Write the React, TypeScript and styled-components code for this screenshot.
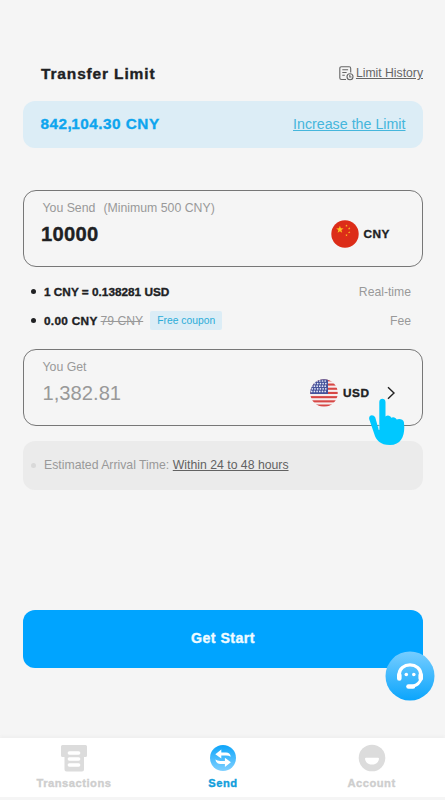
import React from "react";
import styled, { createGlobalStyle, css } from "styled-components";

const GlobalStyle = createGlobalStyle`
  * { box-sizing: border-box; }
  html, body { margin: 0; padding: 0; background: #f5f5f5; }
  body { font-family: "Liberation Sans", Arial, sans-serif; color: #202123; }
  svg { display: block; flex: none; }
`;

const heavy = css`
  font-weight: 700;
  -webkit-text-stroke: 0.35px currentColor;
`;

const Screen = styled.div`
  width: 445px;
  height: 800px;
  display: flex;
  flex-direction: column;
  background: #f5f5f5;
  overflow: hidden;
  white-space: nowrap;
`;

const Content = styled.main`
  flex: 1;
  display: flex;
  flex-direction: column;
  padding: 61px 22px 0 23px;
`;

const Header = styled.header`
  height: 24px;
  margin-bottom: 15.5px;
  padding-left: 18px;
  display: flex;
  align-items: center;
  justify-content: space-between;
`;

const Title = styled.h1`
  ${heavy}
  margin: 0;
  font-size: 15.5px;
  line-height: 25px;
  letter-spacing: 0.85px;
`;

const HistoryLink = styled.a`
  display: flex;
  align-items: center;
  gap: 2px;
  font-size: 12.2px;
  color: #666;
  text-decoration: underline;
`;

const LimitCard = styled.section`
  height: 47.5px;
  margin-bottom: 42px;
  padding: 0 17.5px;
  display: flex;
  align-items: center;
  justify-content: space-between;
  border-radius: 12px;
  background: #dcedf6;
`;

const LimitAmount = styled.span`
  ${heavy}
  margin-top: -1px;
  font-size: 15.3px;
  letter-spacing: 0.5px;
  color: #0ea5ee;
`;

const Tight = styled.span`
  letter-spacing: -0.5px;
`;

const IncreaseLink = styled.a`
  margin-top: -1px;
  font-size: 14.25px;
  color: #45b6dc;
  text-decoration: underline;
`;

const AmountCard = styled.section`
  height: 77px;
  padding: 8px 18px;
  display: flex;
  justify-content: space-between;
  border: 1px solid #777;
  border-radius: 13px;
`;

const Field = styled.div`
  display: flex;
  flex-direction: column;
`;

const Label = styled.span`
  display: flex;
  gap: 8px;
  height: 19px;
  padding-left: 0.5px;
  font-size: 12.3px;
  line-height: 19px;
  color: #999;
`;

const Amount = styled.span<{ $muted?: boolean }>`
  height: 32px;
  font-size: 20.2px;
  line-height: 32px;
  ${(p) =>
    p.$muted
      ? css`
          padding-left: 0.5px;
          color: #999;
        `
      : css`
          ${heavy}
          margin-left: -1px;
          letter-spacing: 0.25px;
        `}
`;

const Currency = styled.div<{ $end: number }>`
  height: 28px;
  margin-top: 21px;
  padding-right: ${(p) => p.$end}px;
  display: flex;
  align-items: center;
  gap: 5px;
`;

const CurrencyCode = styled.span`
  ${heavy}
  font-size: 11.8px;
  letter-spacing: 0.5px;
`;

const Details = styled.ul`
  margin: 0;
  padding: 10px 12px 0 8px;
  height: 82px;
  list-style: none;
`;

const DetailRow = styled.li`
  height: 29px;
  display: flex;
  align-items: center;
  font-size: 12.2px;
  color: #999;
`;

const Bullet = styled.i<{ $faint?: boolean }>`
  width: 5px;
  height: 5px;
  margin-right: 8px;
  border-radius: 50%;
  background: ${(p) => (p.$faint ? "#d9d9d9" : "#202123")};
`;

const DetailValue = styled.b<{ $spacing: number }>`
  ${heavy}
  font-size: 11.8px;
  letter-spacing: ${(p) => p.$spacing}px;
  color: #202123;
`;

const OldFee = styled.s`
  margin-left: 3px;
  font-size: 12.2px;
`;

const Coupon = styled.span`
  height: 19px;
  margin-left: 7px;
  width: 72px;
  text-align: center;
  border-radius: 2px;
  background: #dcedf6;
  color: #2bacd8;
  font-size: 10.3px;
  line-height: 19px;
`;

const DetailName = styled.span`
  margin-left: auto;
`;

const Chevron = styled.svg`
  margin-left: 12px;
`;

const Pointer = styled.svg`
  position: absolute;
  left: 345px;
  top: 48px;
`;

const GetArea = styled.div`
  position: relative;
`;

const Arrival = styled.section`
  height: 49px;
  margin-top: 15px;
  padding: 0 0 1px 8px;
  display: flex;
  align-items: center;
  border-radius: 12px;
  background: #ebebeb;
  color: #999;
  font-size: 12.25px;
`;

const ArrivalTime = styled.u`
  margin-left: 3.5px;
  color: #626262;
`;

const ActionArea = styled.div`
  position: relative;
  margin-top: 120px;
`;

const StartButton = styled.button`
  ${heavy}
  display: block;
  width: 100%;
  height: 57.5px;
  padding: 0 0 1px;
  border: 0;
  border-radius: 12px;
  background: #00a4ff;
  color: #effbff;
  font-family: inherit;
  font-size: 14.2px;
  letter-spacing: 0.45px;
`;

const SupportButton = styled.svg`
  position: absolute;
  right: -12px;
  top: 41px;
`;

const TabBar = styled.nav`
  height: 62px;
  display: grid;
  grid-template-columns: 148px 150px 147px;
  border-bottom: 3px solid #f5f5f5;
  background: #fff;
  box-shadow: 0 -2px 3px #efefef;
`;

const Tab = styled.a<{ $active?: boolean }>`
  ${heavy}
  padding-top: 6px;
  display: flex;
  flex-direction: column;
  align-items: center;
  gap: 4px;
  font-size: 11.2px;
  line-height: 15px;
  letter-spacing: 0.5px;
  color: ${(p) => (p.$active ? "#119edb" : "#cecece")};
`;

const star = (cx: number, cy: number, r: number) =>
  Array.from({ length: 10 }, (_, i) => {
    const a = (Math.PI * i) / 5 - Math.PI / 2;
    const d = i % 2 ? r * 0.4 : r;
    return `${cx + d * Math.cos(a)},${cy + d * Math.sin(a)}`;
  }).join(" ");

const HistoryIcon = () => (
  <svg width="15" height="15" viewBox="0 0 15 15" fill="none" stroke="#666" strokeWidth="1.1">
    <path d="M7 13.500H2.600Q.8 13.500 .8 11.900V2.400Q.8.8 2.400.8h7.800q1.500 0 1.500 1.600v4M3.300 3.700h5.800M3.300 6.500h4.300M3.300 9.300h2.500" />
    <circle cx="11" cy="10.700" r="3" />
    <path d="M10.800 9.100v1.900h1.700" />
  </svg>
);

const ChinaFlag = () => (
  <svg width="28" height="28" viewBox="0 0 28 28">
    <circle cx="14" cy="14" r="13.7" fill="#dc2c18" />
    <g fill="#fdc421">
      <polygon points={star(8.9, 9.6, 3.9)} />
      <polygon points={star(15.5, 5.7, 1.3)} />
      <polygon points={star(18.2, 8.4, 1.3)} />
      <polygon points={star(18.2, 12.3, 1.3)} />
      <polygon points={star(15.5, 15.2, 1.3)} />
    </g>
  </svg>
);

const UsaFlag = () => (
  <svg width="28" height="28" viewBox="0 0 28 28">
    <clipPath id="usa">
      <circle cx="14" cy="14" r="13.7" />
    </clipPath>
    <g clipPath="url(#usa)">
      <rect width="28" height="28" fill="#f6eeee" />
      {[0.3, 4.5, 8.7, 12.9, 17.1, 21.3, 25.5].map((y) => (
        <rect key={y} y={y} width="28" height="2.1" fill="#d74745" />
      ))}
      <rect width="18" height="15" fill="#46539b" />
      {[2, 4.6, 7.2, 9.8, 12.4].map((y, row) =>
        [1.7, 4.4, 7.1, 9.8, 12.5, 15.2].map((x) => (
          <circle key={`${x}-${y}`} cx={x + (row % 2) * 0.6} cy={y} r=".85" fill="#e7e9f7" />
        ))
      )}
    </g>
  </svg>
);

const Hand = () => (
  <Pointer width="37" height="49" viewBox="0 0 37 49">
    <path
      fill="#00c8ff"
      d="M11.300 33V5C11.300 .6 17.500 .6 17.500 5v14.500c2-2 5-.9 5.700 1.200 2-1.300 5-.1 5.500 1.800 2.800-1.400 6.700 .1 7.200 2.500C37.400 37 34.500 48 22 48 12 48 8 43 6.300 37L1.300 22.500C.1 18.200 5 16.500 7.300 20.500L10.800 33Z"
    />
    <path d="M11 27v5.500" stroke="#a6dbe9" strokeWidth=".7" />
  </Pointer>
);

const Support = () => (
  <SupportButton width="50" height="50" viewBox="0 0 50 50">
    <defs>
      <linearGradient id="support" x2="0" y2="1">
        <stop offset="0" stopColor="#76cdff" />
        <stop offset="1" stopColor="#0ba5fc" />
      </linearGradient>
    </defs>
    <circle cx="25" cy="25" r="24.500" fill="url(#support)" />
    <g fill="none" stroke="#fff" strokeLinecap="round" strokeLinejoin="round">
      <path d="M14 24C14 10.500 36 10.500 36 24" strokeWidth="3.300" />
      <path d="M14.300 24v3.500M35.700 24v3.500" strokeWidth="4.600" />
      <path d="M36 28q-2 5.500-7 6.800" strokeWidth="3" />
      <path d="M23.500 35.500h4.500" strokeWidth="4.600" />
    </g>
    <circle cx="21.300" cy="23.500" r="1.800" fill="#fff" />
    <circle cx="28.800" cy="23.500" r="1.800" fill="#fff" />
  </SupportButton>
);

const TransactionsIcon = () => (
  <svg width="28" height="28" viewBox="0 0 28 28">
    <path fill="#dcdcdc" d="M2.500 1h23q1.500 0 1.500 1.500v9q0 1.500-1.500 1.500H24v12.500q0 2-2 2H6.500q-2 0-2-2V13h-2Q1 13 1 11.500v-9Q1 1 2.500 1Z" />
    <path stroke="#fff" strokeWidth="3.300" strokeLinecap="round" d="M9.300 9h9.400M9.300 15h9.400M9.300 21h9.400" />
  </svg>
);

const SendIcon = () => (
  <svg width="28" height="28" viewBox="0 0 28 28">
    <defs>
      <linearGradient id="send" x2="0" y2="1">
        <stop offset="0" stopColor="#0da5fa" />
        <stop offset="1" stopColor="#80d0ff" />
      </linearGradient>
    </defs>
    <circle cx="14" cy="14" r="13" fill="url(#send)" />
    <path
      fill="#fff"
      d="M6.300 10.200 12.300 5.600v3h4.700q4 0 4.800 4.200-2-1.300-4.800-1.300h-4.700v3.100ZM21.900 18.300l-6 4.600v-3h-4.700q-4 0-4.800-4.300 2 1.300 4.800 1.300h4.700v-3.100Z"
    />
  </svg>
);

const AccountIcon = () => (
  <svg width="28" height="28" viewBox="0 0 28 28">
    <circle cx="14" cy="14" r="13.300" fill="#dcdcdc" />
    <path d="M8 13.700h12q1.100 0 1 1.200c-1.200 7.600-12.800 7.600-14 0q-.1-1.200 1-1.200Z" fill="#fff" />
  </svg>
);

export default function App() {
  return (
    <Screen>
      <GlobalStyle />
      <Content>
        <Header>
          <Title>Transfer Limit</Title>
          <HistoryLink>
            <HistoryIcon />
            <span>Limit History</span>
          </HistoryLink>
        </Header>
        <LimitCard>
          <LimitAmount>
            842<Tight>,</Tight>104.30 CNY
          </LimitAmount>
          <IncreaseLink>Increase the Limit</IncreaseLink>
        </LimitCard>
        <AmountCard>
          <Field>
            <Label>
              <span>You Send</span>
              <span>(Minimum 500 CNY)</span>
            </Label>
            <Amount>10000</Amount>
          </Field>
          <Currency $end={14}>
            <ChinaFlag />
            <CurrencyCode>CNY</CurrencyCode>
          </Currency>
        </AmountCard>
        <Details>
          <DetailRow>
            <Bullet />
            <DetailValue $spacing={0}>1 CNY = 0.138281 USD</DetailValue>
            <DetailName>Real-time</DetailName>
          </DetailRow>
          <DetailRow>
            <Bullet />
            <DetailValue $spacing={0.3}>0.00 CNY</DetailValue>
            <OldFee>79 CNY</OldFee>
            <Coupon>Free coupon</Coupon>
            <DetailName>Fee</DetailName>
          </DetailRow>
        </Details>
        <GetArea>
          <AmountCard>
            <Field>
              <Label>You Get</Label>
              <Amount $muted>1,382.81</Amount>
            </Field>
            <Currency $end={8.5}>
              <UsaFlag />
              <CurrencyCode>USD</CurrencyCode>
              <Chevron width="9" height="14" viewBox="0 0 9 14" fill="none" stroke="#222" strokeWidth="1.400">
                <path d="m1 1.200 6 5.800-6 5.800" />
              </Chevron>
            </Currency>
          </AmountCard>
          <Hand />
        </GetArea>
        <Arrival>
          <Bullet $faint />
          <span>Estimated Arrival Time:</span>
          <ArrivalTime>Within 24 to 48 hours</ArrivalTime>
        </Arrival>
        <ActionArea>
          <StartButton>Get Start</StartButton>
          <Support />
        </ActionArea>
      </Content>
      <TabBar>
        <Tab>
          <TransactionsIcon />
          Transactions
        </Tab>
        <Tab $active>
          <SendIcon />
          Send
        </Tab>
        <Tab>
          <AccountIcon />
          Account
        </Tab>
      </TabBar>
    </Screen>
  );
}
